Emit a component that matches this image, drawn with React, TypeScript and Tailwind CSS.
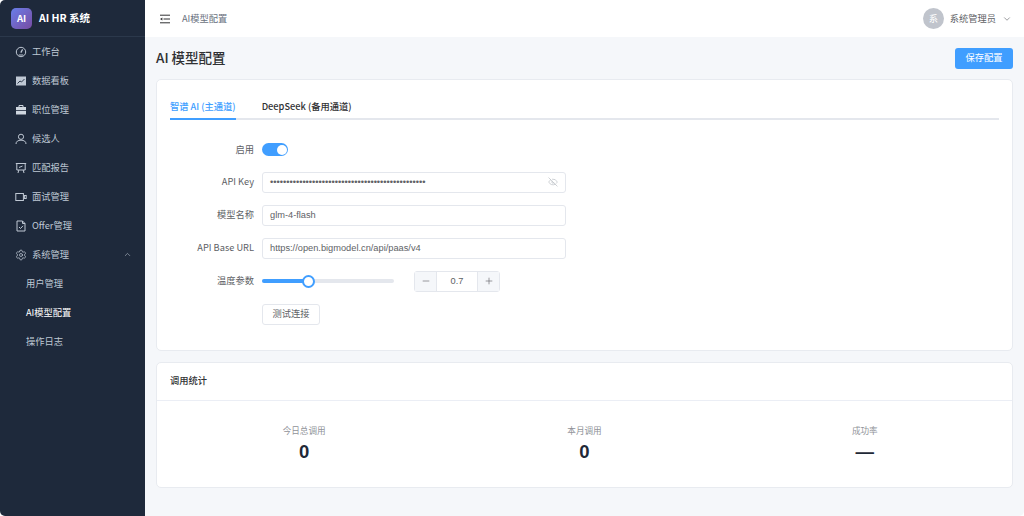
import React from 'react';
import { ChevronDown, ChevronUp, EyeOff, Minus, Plus, Settings } from 'lucide-react';

const font = "font-['Noto_Sans_CJK_SC','Liberation_Sans',sans-serif]";
const inputFont = "font-['Liberation_Sans','Noto_Sans_CJK_SC',sans-serif]";

function GaugeIcon() {
  return (
    <svg viewBox="0 0 12 12" className="h-3 w-3" fill="none" stroke="#bfc8d4" strokeWidth="1">
      <circle cx="6" cy="6" r="4.7" />
      <path d="M7.6 3.4 L5.8 6.6" strokeWidth="1.3" />
      <path d="M3.8 9 H8.2" />
    </svg>
  );
}

function ChartIcon() {
  return (
    <svg viewBox="0 0 12 12" className="h-3 w-3">
      <rect x="1" y="1.5" width="10" height="9" fill="#bfc8d4" />
      <path d="M2.5 8.5 L5 6 L6.5 7 L9.5 4" fill="none" stroke="#1e293b" strokeWidth="0.9" />
    </svg>
  );
}

function BriefcaseIcon() {
  return (
    <svg viewBox="0 0 12 12" className="h-3 w-3">
      <path d="M4 3 V1.5 H8 V3" fill="none" stroke="#cfd6df" strokeWidth="1" />
      <rect x="1" y="3" width="10" height="3.2" fill="#cfd6df" />
      <rect x="1" y="7" width="10" height="3.5" fill="#cfd6df" />
    </svg>
  );
}

function PersonIcon() {
  return (
    <svg viewBox="0 0 12 12" className="h-3 w-3" fill="none" stroke="#bfc8d4" strokeWidth="1">
      <circle cx="6" cy="3.8" r="2.6" />
      <path d="M1 11 C1 8.4 3 7.2 6 7.2 C9 7.2 11 8.4 11 11" />
    </svg>
  );
}

function BoardIcon() {
  return (
    <svg viewBox="0 0 12 12" className="h-3 w-3" fill="none" stroke="#bfc8d4" strokeWidth="1">
      <path d="M0.8 1.5 H11.2" />
      <path d="M1.8 1.5 V8 H10.2 V1.5" />
      <path d="M3.8 8 L3 11 M8.2 8 L9 11" />
      <path d="M4 5.5 L7.5 4" />
    </svg>
  );
}

function VideoIcon() {
  return (
    <svg viewBox="0 0 12 12" className="h-3 w-3" fill="none" stroke="#bfc8d4" strokeWidth="1">
      <rect x="0.8" y="2.5" width="7.6" height="7" />
      <rect x="9.4" y="4.5" width="1.8" height="3" />
    </svg>
  );
}

function DocIcon() {
  return (
    <svg viewBox="0 0 12 12" className="h-3 w-3" fill="none" stroke="#bfc8d4" strokeWidth="1">
      <path d="M7.5 1 H2 V11 H10 V3.5 Z" />
      <path d="M7.5 1 V3.5 H10" />
      <path d="M4 7 L5.5 8.5 L8 5.8" />
    </svg>
  );
}

function FoldIcon() {
  return (
    <svg viewBox="0 0 10 10" className="h-[10px] w-[10px]" fill="none" stroke="#303133" strokeWidth="1">
      <path d="M0 1.2 H10" />
      <path d="M3.5 5 H10" />
      <path d="M0 8.8 H10" />
      <path d="M2.4 3.5 L0 5 L2.4 6.5 Z" fill="#303133" stroke="none" />
    </svg>
  );
}

const navItems = [
  { label: '工作台', icon: <GaugeIcon /> },
  { label: '数据看板', icon: <ChartIcon /> },
  { label: '职位管理', icon: <BriefcaseIcon /> },
  { label: '候选人', icon: <PersonIcon /> },
  { label: '匹配报告', icon: <BoardIcon /> },
  { label: '面试管理', icon: <VideoIcon /> },
  { label: 'Offer管理', icon: <DocIcon /> },
];

const subItems = ['用户管理', 'AI模型配置', '操作日志'];

function Sidebar() {
  return (
    <aside className="flex h-full w-[145px] shrink-0 flex-col bg-[#1e293b]">
      <div className="flex h-[37px] items-center gap-[7px] border-b border-[#2b384b] pl-[11px]">
        <div className="flex h-[21px] w-[21px] items-center justify-center rounded-[5px] bg-gradient-to-br from-[#667eea] to-[#764ba2] text-[9.5px] font-bold text-white">
          AI
        </div>
        <span className="text-[10.5px] font-semibold text-white">AI HR 系统</span>
      </div>
      <nav className="flex flex-col">
        {navItems.map((item) => (
          <div key={item.label} className="flex h-[29px] items-center gap-[5px] pl-[15px] text-[9.25px] text-[#bfc8d4]">
            <span className="flex w-3 justify-center">{item.icon}</span>
            {item.label}
          </div>
        ))}
        <div className="flex h-[29px] items-center gap-[5px] pl-[15px] pr-[13px] text-[9.25px] text-[#bfc8d4]">
          <Settings className="h-3 w-3" strokeWidth={1.5} />
          <span className="flex-1">系统管理</span>
          <ChevronUp className="h-[9px] w-[9px]" strokeWidth={1.5} />
        </div>
        {subItems.map((label) => (
          <div
            key={label}
            className={`flex h-[29px] items-center pl-[26px] text-[9.25px] ${
              label === 'AI模型配置' ? 'text-white' : 'text-[#bfc8d4]'
            }`}
          >
            {label}
          </div>
        ))}
      </nav>
    </aside>
  );
}

function Header() {
  return (
    <header className="flex h-[37px] shrink-0 items-center bg-white pl-[15px] pr-[12px]">
      <FoldIcon />
      <span className="ml-[12px] flex-1 text-[9.25px] text-[#6b7280]">AI模型配置</span>
      <div className="mr-[6px] flex h-[21px] w-[21px] items-center justify-center rounded-full bg-[#c0c4cc] text-[9.25px] text-white">
        系
      </div>
      <span className="text-[9.25px] text-[#606266]">系统管理员</span>
      <ChevronDown className="ml-[6px] h-[10px] w-[10px] text-[#606266]" strokeWidth={1.5} />
    </header>
  );
}

function FormRow({ label, children }: { label: string; children: React.ReactNode }) {
  return (
    <div className="flex items-center">
      <label className="w-[92px] shrink-0 pr-[8px] text-right text-[9.25px] text-[#606266]">{label}</label>
      {children}
    </div>
  );
}

function TextField({ value, suffix }: { value: string; suffix?: React.ReactNode }) {
  return (
    <div className={`flex h-[21px] w-[304px] items-center rounded-[3px] border border-[#e4e7ed] bg-white px-[7px] text-[9.25px] text-[#606266] ${inputFont}`}>
      <span className="flex-1 pt-px">{value}</span>
      {suffix}
    </div>
  );
}

function ConfigCard() {
  return (
    <section className="rounded-[5px] border border-[#e8ebf0] bg-white pb-[25px] pl-[13px] pr-[13px] pt-[15px]">
      <div className="flex h-[25px] gap-[26px] border-b-2 border-[#e4e7ed] text-[9.25px] font-medium">
        <div className="-mb-[2px] border-b-2 border-[#409eff] pt-[5px] text-[#409eff]">智谱 AI (主通道)</div>
        <div className="pt-[5px] text-[#303133]">DeepSeek (备用通道)</div>
      </div>
      <div className="flex flex-col pt-[23px]">
        <FormRow label="启用">
          <div className="flex h-[13px] w-[26px] items-center justify-end rounded-full bg-[#409eff] pr-[1.5px]">
            <div className="h-[10px] w-[10px] rounded-full bg-white" />
          </div>
        </FormRow>
        <div className="mt-[15px] flex flex-col gap-[12px]">
          <FormRow label="API Key">
            <TextField
              value={'•'.repeat(48)}
              suffix={<EyeOff className="h-[10px] w-[10px] text-[#b4b8bf]" strokeWidth={1.5} />}
            />
          </FormRow>
          <FormRow label="模型名称">
            <TextField value="glm-4-flash" />
          </FormRow>
          <FormRow label="API Base URL">
            <TextField value="https://open.bigmodel.cn/api/paas/v4" />
          </FormRow>
          <FormRow label="温度参数">
            <div className="relative flex h-[21px] w-[132px] items-center">
              <div className="h-[4px] w-full rounded-full bg-[#e4e7ed]" />
              <div className="absolute left-0 top-[8.5px] h-[4px] w-[46px] rounded-l-full bg-[#409eff]" />
              <div className="absolute left-[40px] top-[4px] h-[13px] w-[13px] rounded-full border-2 border-[#409eff] bg-white" />
            </div>
            <div className="ml-[20px] flex h-[21px] w-[86px] items-center rounded-[3px] border border-[#e4e7ed] text-[#606266]">
              <div className="flex h-full w-[21px] items-center justify-center bg-[#f5f7fa]">
                <Minus className="h-[10px] w-[10px]" strokeWidth={1.5} />
              </div>
              <div className={`flex-1 border-x border-[#e4e7ed] text-center text-[9.25px] leading-[19px] ${inputFont}`}>0.7</div>
              <div className="flex h-full w-[21px] items-center justify-center bg-[#f5f7fa]">
                <Plus className="h-[10px] w-[10px]" strokeWidth={1.5} />
              </div>
            </div>
          </FormRow>
          <FormRow label="">
            <button className="flex h-[21px] w-[58px] items-center justify-center rounded-[3px] border border-[#e4e7ed] bg-white text-[9.25px] text-[#606266]">
              测试连接
            </button>
          </FormRow>
        </div>
      </div>
    </section>
  );
}

const stats = [
  { label: '今日总调用', value: '0' },
  { label: '本月调用', value: '0' },
  { label: '成功率', value: '—' },
];

function StatsCard() {
  return (
    <section className="mt-[11px] rounded-[5px] border border-[#e8ebf0] bg-white">
      <div className="flex h-[38px] items-center border-b border-[#ebeef5] pl-[13px] text-[9.25px] font-medium text-[#303133]">
        调用统计
      </div>
      <div className="grid grid-cols-3 px-[7px] pb-[24px] pt-[23px]">
        {stats.map((s) => (
          <div key={s.label} className="flex flex-col items-center">
            <span className="text-[8.6px] leading-[12px] text-[#909399]">{s.label}</span>
            <span className={`mt-[4px] text-[18.5px] font-bold leading-[23px] text-[#1f2937] ${inputFont}`}>{s.value}</span>
          </div>
        ))}
      </div>
    </section>
  );
}

export default function App() {
  return (
    <div className={`flex h-[516px] w-[1024px] overflow-hidden rounded-[5px] bg-[#f5f7fa] ${font}`}>
      <Sidebar />
      <div className="flex min-w-0 flex-1 flex-col">
        <Header />
        <main className="flex-1 pl-[11px] pr-[11px] pt-[10px]">
          <div className="mb-[10px] flex h-[22px] items-center justify-between">
            <h1 className="pb-[2px] text-[13.5px] font-medium leading-[18px] text-[#303133]">AI 模型配置</h1>
            <button className="h-[21px] w-[58px] rounded-[3px] bg-[#409eff] text-[9.25px] text-white">保存配置</button>
          </div>
          <ConfigCard />
          <StatsCard />
        </main>
      </div>
    </div>
  );
}
